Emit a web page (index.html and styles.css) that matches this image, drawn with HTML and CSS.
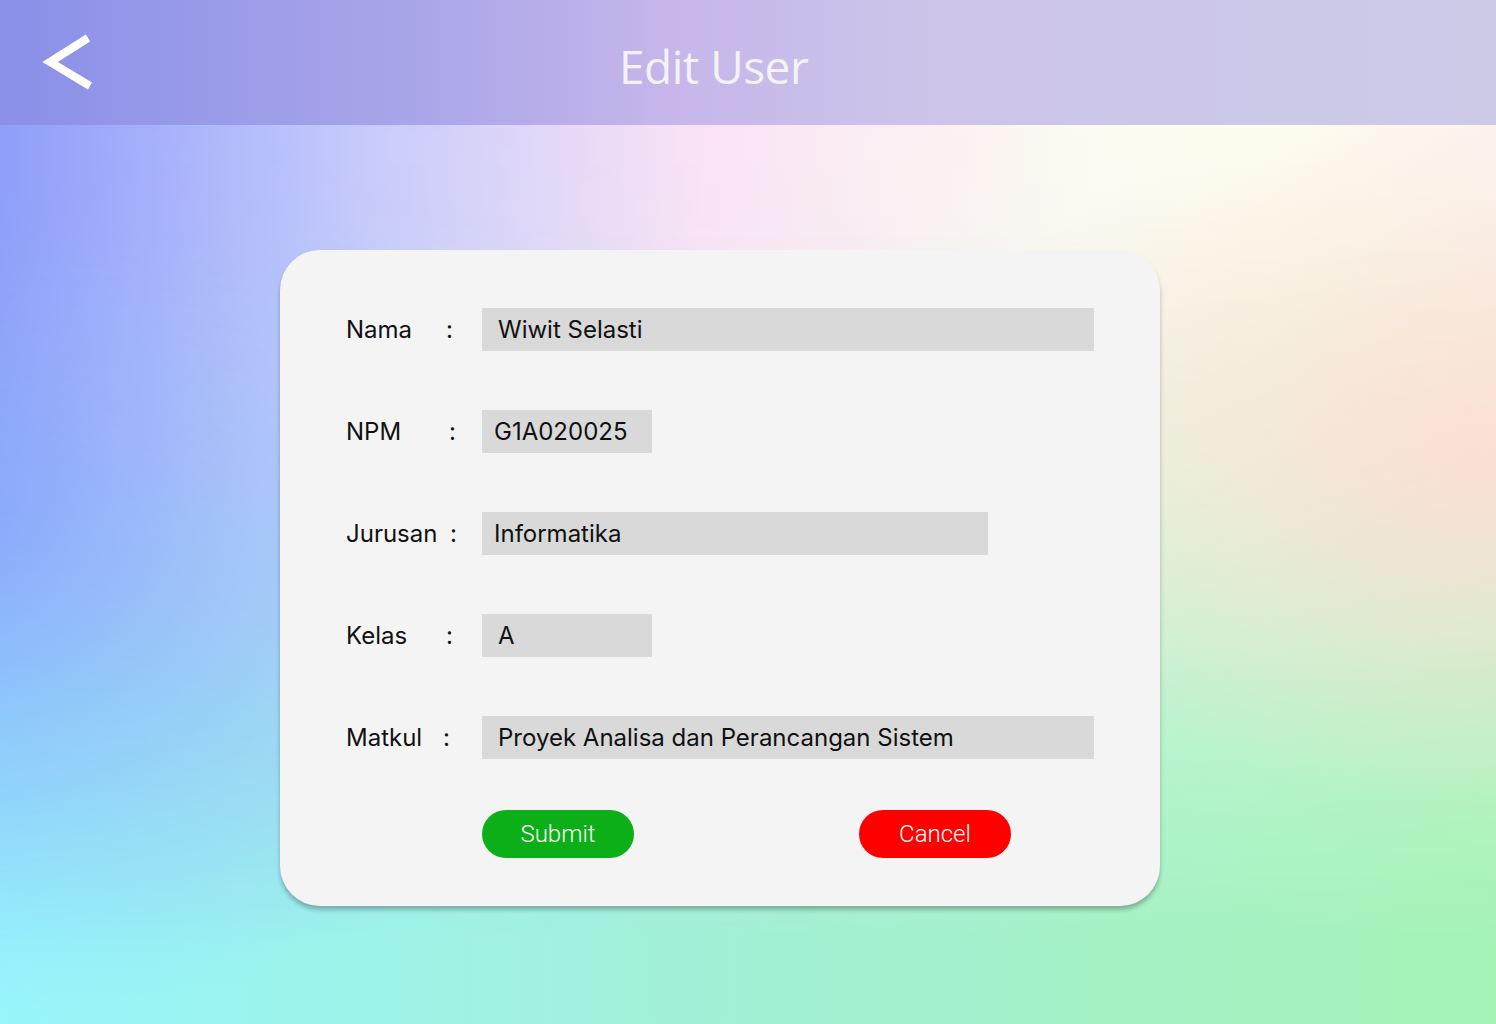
FILE: index.html
```html
<!DOCTYPE html>
<html lang="id">
<head>
<meta charset="utf-8">
<title>Edit User</title>
<link rel="stylesheet" href="styles.css">
</head>
<body>
<div class="page">
  <header class="topbar">
    <a class="back" href="#" aria-label="Kembali">
      <svg width="60" height="60" viewBox="0 0 60 60">
        <polyline points="46,6 8,30 48,54" fill="none" stroke="#ffffff" stroke-width="8" stroke-linejoin="miter" stroke-miterlimit="10"/>
      </svg>
    </a>
    <h1 class="title">Edit User</h1>
  </header>
  <main class="content">
    <form class="card">
      <div class="row">
        <span class="label">Nama</span><span class="colon">:</span>
        <div class="field w-full pad-16">Wiwit Selasti</div>
      </div>
      <div class="row">
        <span class="label">NPM</span><span class="colon c-npm">:</span>
        <div class="field w-s pad-12">G1A020025</div>
      </div>
      <div class="row">
        <span class="label">Jurusan</span><span class="colon c-jur">:</span>
        <div class="field w-m pad-12">Informatika</div>
      </div>
      <div class="row">
        <span class="label">Kelas</span><span class="colon">:</span>
        <div class="field w-s pad-16">A</div>
      </div>
      <div class="row">
        <span class="label">Matkul</span><span class="colon c-mat">:</span>
        <div class="field w-full pad-16">Proyek Analisa dan Perancangan Sistem</div>
      </div>
      <div class="actions">
        <button type="button" class="btn btn-submit">Submit</button>
        <button type="button" class="btn btn-cancel">Cancel</button>
      </div>
    </form>
  </main>
</div>
</body>
</html>
```

FILE: styles.css
```css
html, body {
  margin: 0;
  padding: 0;
}
body {
  width: 1496px;
  height: 1024px;
  overflow: hidden;
  font-family: Inter, "Liberation Sans", sans-serif;
}
.page {
  position: relative;
  width: 1496px;
  height: 1024px;
  background:
    radial-gradient(ellipse 560px 380px at 100% 42%, rgba(253, 220, 210, 0.95), rgba(253, 220, 210, 0) 100%),
    radial-gradient(ellipse 700px 500px at 0% 50%, rgba(132, 176, 252, 0.75), rgba(132, 176, 252, 0) 100%),
    linear-gradient(to right, #98f6fc 0%, #a2f0d8 45%, #a6f3b6 100%);
  overflow: hidden;
}
.page::before {
  content: "";
  position: absolute;
  inset: 0;
  background:
    radial-gradient(ellipse 600px 360px at 100% 45%, rgba(253, 222, 212, 0.95), rgba(253, 222, 212, 0) 100%),
    linear-gradient(to right, #8e9bfa 0%, #c9cafb 25%, #fde2f6 47%, #fefaf2 72%, #fffdf0 85%, #fdf5ef 100%);
  -webkit-mask-image: linear-gradient(to bottom, #000 0%, rgba(0,0,0,0.95) 22%, rgba(0,0,0,0.7) 45%, rgba(0,0,0,0.25) 70%, rgba(0,0,0,0) 92%);
  mask-image: linear-gradient(to bottom, #000 0%, rgba(0,0,0,0.95) 22%, rgba(0,0,0,0.7) 45%, rgba(0,0,0,0.25) 70%, rgba(0,0,0,0) 92%);
}
.topbar {
  position: relative;
  z-index: 1;
  height: 125px;
  display: flex;
  align-items: center;
  background: linear-gradient(to right, #8a8fe8 0%, #a9a6e9 28%, #c6b6ea 45%, #ccc4e9 62%, #cccbe8 100%);
}
.back {
  display: block;
  width: 60px;
  height: 60px;
  margin-left: 42px;
  margin-top: -2px;
}
.back svg {
  display: block;
}
.title {
  margin: 0 0 0 517px;
  padding-top: 6px;
  font-family: "Open Sans", "Noto Sans", sans-serif;
  font-weight: 400;
  font-size: 46px;
  letter-spacing: -0.5px;
  color: #f3f3f5;
}
.content {
  position: relative;
  z-index: 1;
  padding: 125px 0 0 280px;
}
.card {
  box-sizing: border-box;
  width: 880px;
  height: 656px;
  background: #f4f4f4;
  border-radius: 40px;
  box-shadow: 0 4px 4px rgba(0, 0, 0, 0.25);
  padding: 58px 66px 48px 66px;
  display: flex;
  flex-direction: column;
  gap: 59px;
}
.row {
  display: flex;
  align-items: center;
  height: 43px;
  font-size: 24px;
  color: #111111;
}
.label {
  width: 100px;
}
.colon {
  width: 36px;
  box-sizing: border-box;
}
.c-npm { padding-left: 3px; }
.c-jur { padding-left: 4px; }
.c-mat { margin-left: -3px; width: 39px; }
.field {
  box-sizing: border-box;
  height: 43px;
  line-height: 43px;
  background: #d9d9d9;
  color: #111111;
  font-size: 24px;
}
.pad-16 { padding-left: 16px; }
.pad-12 { padding-left: 12px; }
.w-full { width: 612px; }
.w-m { width: 506px; }
.w-s { width: 170px; }
.actions {
  display: flex;
  gap: 225px;
  padding-left: 136px;
  margin-top: -8px;
}
.btn {
  width: 152px;
  height: 48px;
  border: none;
  border-radius: 24px;
  color: #ffffff;
  font-family: Roboto, "Liberation Sans", sans-serif;
  font-size: 24px;
  font-weight: 300;
  padding: 0;
  cursor: pointer;
}
.btn-submit { background: #0caf17; }
.btn-cancel { background: #ff0000; }
```
